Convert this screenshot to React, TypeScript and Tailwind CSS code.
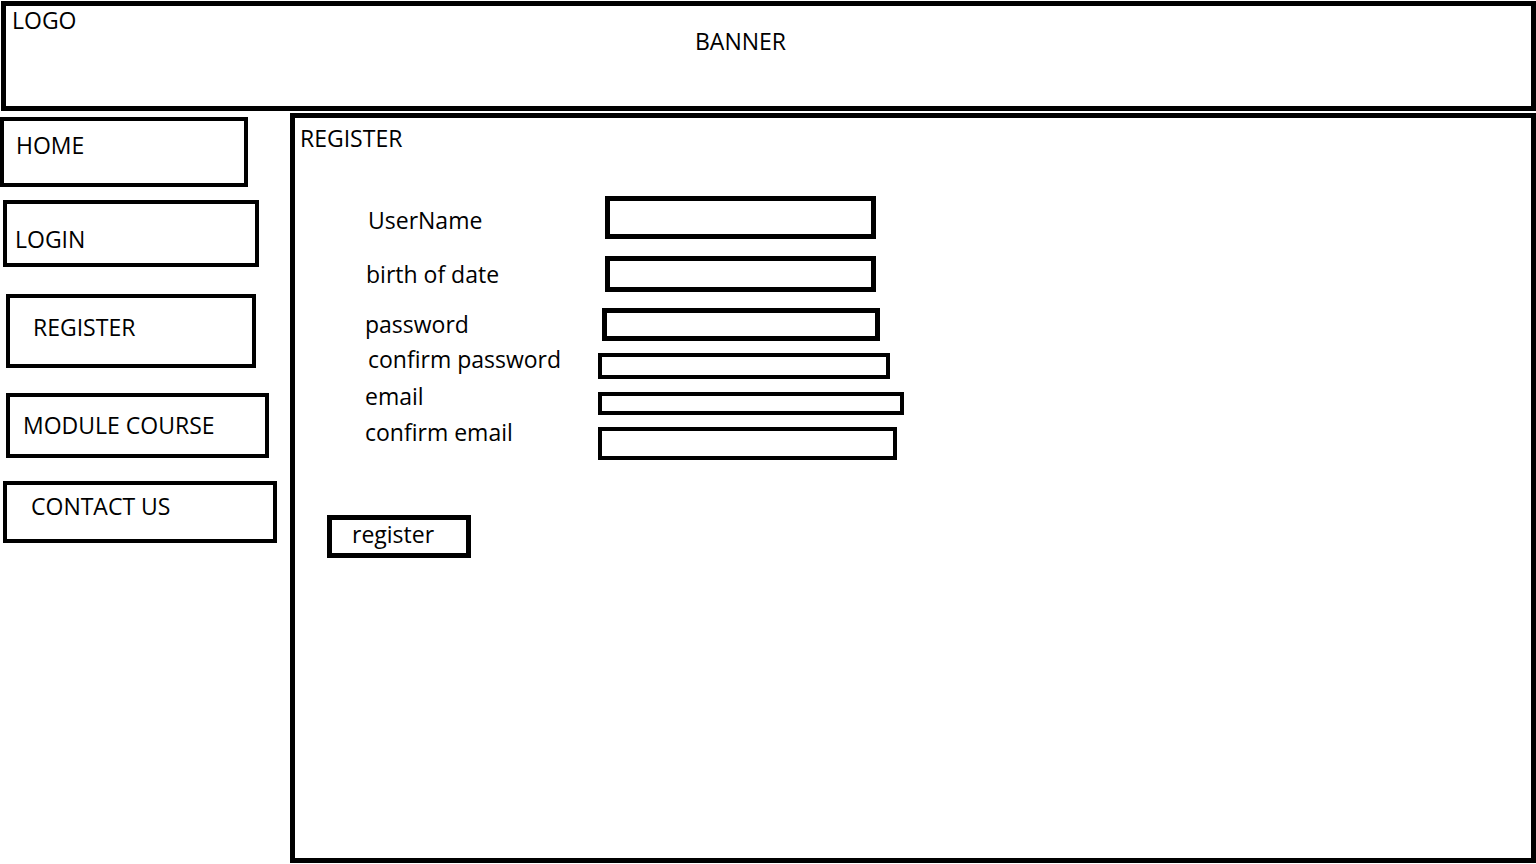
const navItems = [
  { label: "HOME", box: "ml-0 mt-[6px] w-[248px] h-[70px] pl-[12px] pt-[13px]" },
  { label: "LOGIN", box: "ml-[3px] mt-[13px] w-[256px] h-[67px] pl-[8px] pt-[24px]" },
  { label: "REGISTER", box: "ml-[6px] mt-[27px] w-[250px] h-[74px] pl-[23px] pt-[18px]" },
  { label: "MODULE COURSE", box: "ml-[6px] mt-[25px] w-[263px] h-[65px] pl-[13px] pt-[17px]" },
  { label: "CONTACT US", box: "ml-[3px] mt-[23px] w-[274px] h-[62px] pl-[24px] pt-[10px]" },
];

const labels = [
  { text: "UserName", cls: "mt-[59px] ml-[3px]" },
  { text: "birth of date", cls: "mt-[31px] ml-[1px]" },
  { text: "password", cls: "mt-[27px] ml-0" },
  { text: "confirm password", cls: "mt-[12px] ml-[3px]" },
  { text: "email", cls: "mt-[14px] ml-0" },
  { text: "confirm email", cls: "mt-[13px] ml-0" },
];

const inputs = [
  "mt-[46px] ml-[7px] w-[271px] h-[43px] border-[5px]",
  "mt-[17px] ml-[7px] w-[271px] h-[36px] border-[5px]",
  "mt-[16px] ml-[4px] w-[278px] h-[33px] border-[5px]",
  "mt-[12px] ml-0 w-[292px] h-[26px] border-[4px]",
  "mt-[13px] ml-0 w-[306px] h-[23px] border-[4px]",
  "mt-[12px] ml-0 w-[299px] h-[33px] border-[4px]",
];

function Sidebar() {
  return (
    <nav className="flex w-[290px] shrink-0 flex-col items-start">
      {navItems.map((item) => (
        <div key={item.label} className={`border-4 border-black ${item.box}`}>
          <span className="block whitespace-nowrap">{item.label}</span>
        </div>
      ))}
    </nav>
  );
}

function RegisterPanel() {
  return (
    <main className="mt-[2px] flex h-[750px] w-[1246px] flex-col items-start border-[5px] border-black">
      <h1 className="ml-[5px] mt-[9px] font-normal">REGISTER</h1>
      <div className="ml-[70px] flex items-start">
        <div className="flex w-[233px] shrink-0 flex-col items-start">
          {labels.map((l) => (
            <label key={l.text} className={`block whitespace-nowrap ${l.cls}`}>
              {l.text}
            </label>
          ))}
        </div>
        <div className="flex flex-col items-start">
          {inputs.map((cls, i) => (
            <div key={i} className={`border-black bg-white ${cls}`} />
          ))}
        </div>
      </div>
      <div className="ml-[32px] mt-[55px] h-[43px] w-[144px] border-[5px] border-black pl-[20px] pt-[3px]">
        register
      </div>
    </main>
  );
}

export default function App() {
  return (
    <div className="h-[864px] w-[1536px] overflow-hidden bg-white text-[23px] leading-[23px] text-black [font-family:'Open_Sans',sans-serif]">
      <header className="ml-px mt-px flex h-[110px] w-[1535px] items-start border-[5px] border-black">
        <span className="ml-[6px] mt-[3px] w-[683px] shrink-0">LOGO</span>
        <span className="mt-[24px]">BANNER</span>
      </header>
      <div className="flex items-start">
        <Sidebar />
        <RegisterPanel />
      </div>
    </div>
  );
}
